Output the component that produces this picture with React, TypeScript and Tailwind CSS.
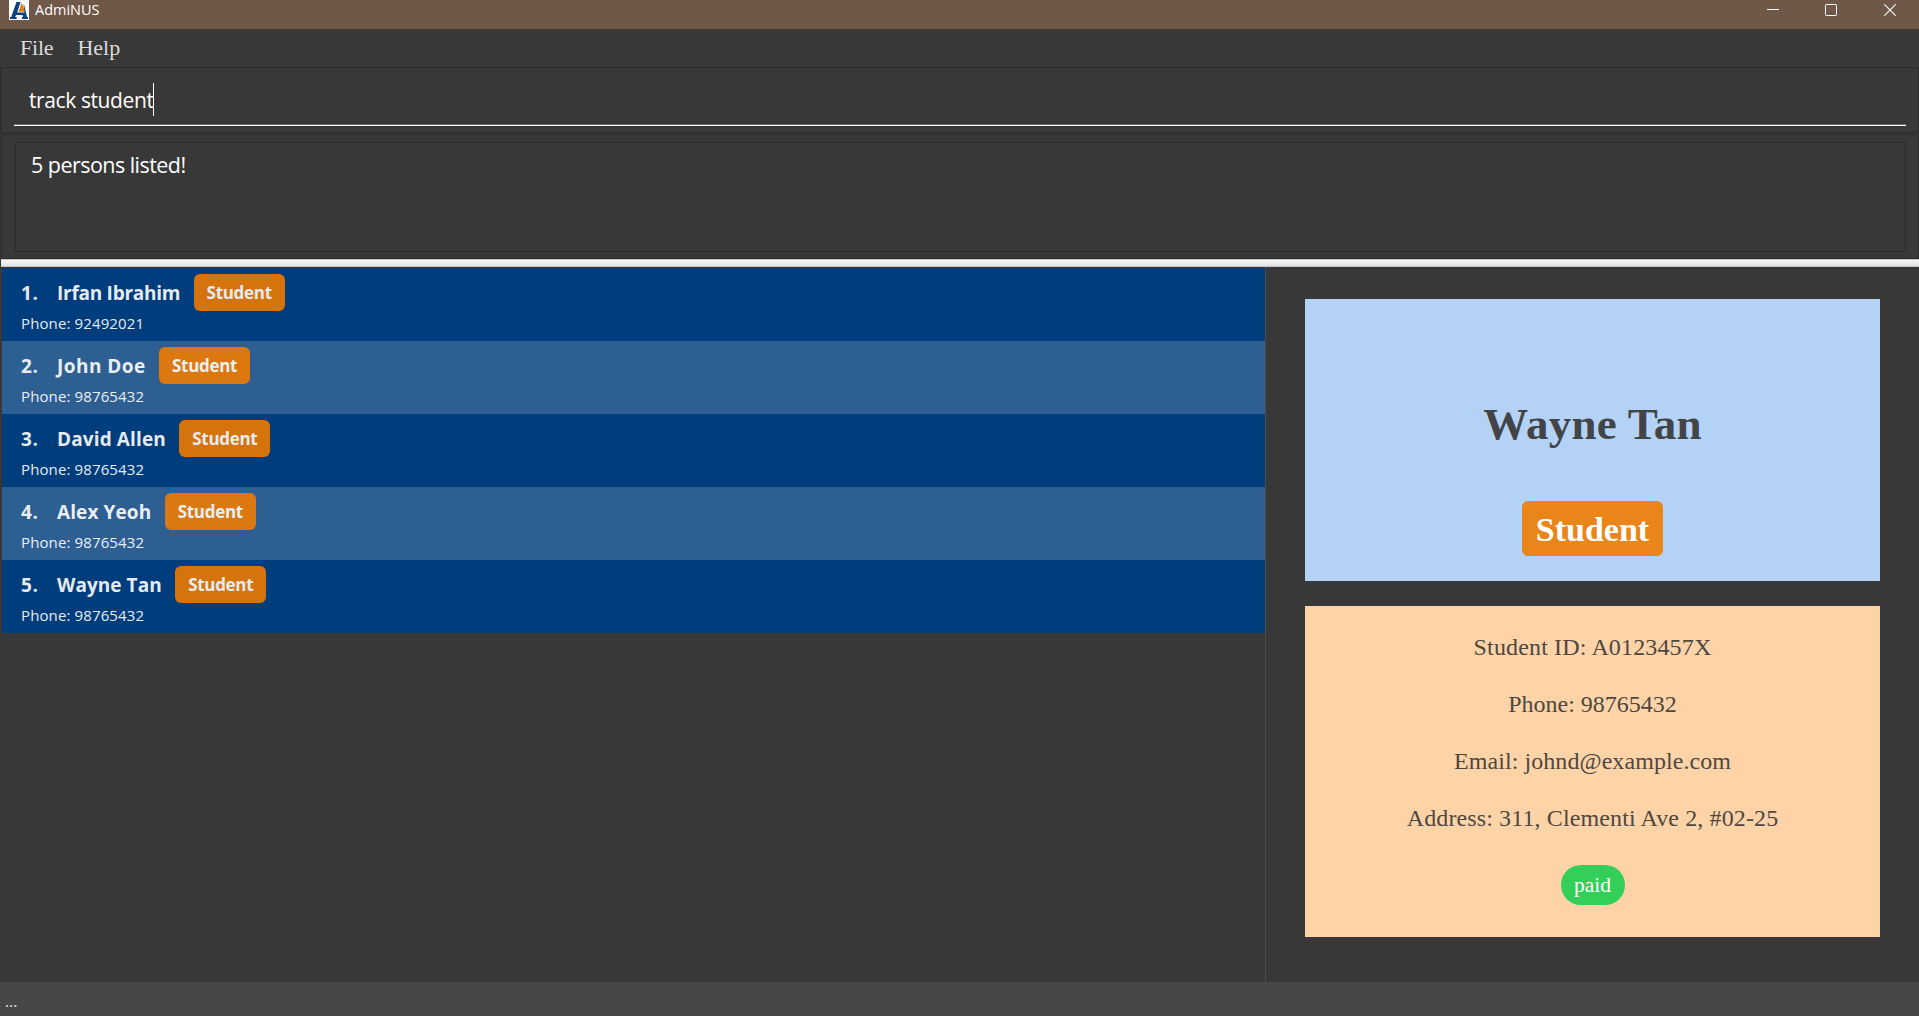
const persons = [
  { name: "Irfan Ibrahim", phone: "92492021", track: "tracking-[-0.26px]" },
  { name: "John Doe", phone: "98765432", track: "tracking-[0.45px]" },
  { name: "David Allen", phone: "98765432", track: "tracking-[0.12px]" },
  { name: "Alex Yeoh", phone: "98765432", track: "tracking-[0.1px]" },
  { name: "Wayne Tan", phone: "98765432", track: "tracking-[0.05px]" },
];

const details = [
  { text: "Student ID: A0123457X", track: "tracking-[0.15px]" },
  { text: "Phone: 98765432", track: "tracking-normal" },
  { text: "Email: johnd@example.com", track: "tracking-[0.07px]" },
  { text: "Address: 311, Clementi Ave 2, #02-25", track: "tracking-[0.12px]" },
];

function Logo() {
  return (
    <svg width="20" height="20" viewBox="0 0 20 20" className="shrink-0">
      <rect width="20" height="20" fill="#fff" />
      <path d="M14 1L18 -1M15 4L19 1" stroke="#d8d8d8" strokeWidth="0.8" />
      <path d="M7.5 2H11.6L8.2 12.4H15.4L14.6 9L14.8 3.4L18 17H19V19H13V17H14L13.6 15H7L6.2 17H7.6V19H1V17H2.2Z" fill="#0b427f" />
      <path d="M12.8 2.6L16 11.8H9.6Z" fill="#ef7c00" />
    </svg>
  );
}

function TitleBar() {
  return (
    <header className="flex h-[29px] items-start bg-[#6f5848] pl-[9px] text-white">
      <Logo />
      <span className="ml-1.5 text-[14.5px] leading-5">AdmiNUS</span>
      <div className="ml-auto flex pr-[23px] pt-1">
        <svg width="12" height="12" className="mr-[46px]" stroke="#fff" fill="none"><path d="M0 5.5H12" /></svg>
        <svg width="12" height="12" className="mr-[47px]" stroke="#fff" fill="none"><rect x="0.5" y="0.5" width="11" height="11" rx="0.8" /></svg>
        <svg width="12" height="12" stroke="#fff" fill="none"><path d="M0.3 0.3L11.7 11.7M11.7 0.3L0.3 11.7" strokeWidth="1.1" /></svg>
      </div>
    </header>
  );
}

function PersonRow({ index }: { index: number }) {
  const p = persons[index];
  const even = index % 2 === 1;
  return (
    <li className={`h-[73px] pl-[19px] pt-1.5 ${even ? "bg-[#2d5f93] text-[#eaeff4]" : "bg-[#003d7c] text-[#e5ebf1]"}`}>
      <div className="flex h-[37px] items-center font-bold">
        <span className="w-9 pt-px text-[19px] tracking-[0.5px]">{index + 1}.</span>
        <span className={`whitespace-nowrap pt-px text-[19px] ${p.track}`}>{p.name}</span>
        <span className={`ml-[13.5px] flex h-[37px] w-[91px] items-center justify-center rounded-md text-[17px] tracking-[-0.3px] ${even ? "bg-[#dc7810]" : "bg-[#d5740c]"}`}>
          Student
        </span>
      </div>
      <div className="text-[15px] leading-6 tracking-[0.12px]">Phone: {p.phone}</div>
    </li>
  );
}

function DetailPanel() {
  return (
    <section className="flex-1 pl-[39px] pr-[39px] pt-8 font-['Liberation_Serif',serif]">
      <div className="flex h-[282px] flex-col items-center bg-[#b4d2f6] pt-[100px]">
        <h1 className="text-[45px] font-bold leading-[50px] tracking-[0.25px] text-[#424446]">Wayne Tan</h1>
        <span className="mt-[52px] flex h-[55px] w-[141px] items-center justify-center rounded-md bg-[#e98519] pt-px text-[34px] font-bold text-white">
          Student
        </span>
      </div>
      <div className="mt-[25px] flex h-[331px] flex-col items-center bg-[#ffd3a8] pt-[13px] text-[24px] leading-[57px] text-[#4c4841]">
        {details.map((d) => (
          <p key={d.text} className={`whitespace-nowrap ${d.track}`}>{d.text}</p>
        ))}
        <span className="mt-[18px] flex h-10 w-16 items-center justify-center rounded-[20px] bg-[#33cf58] text-[21.5px] text-white">
          paid
        </span>
      </div>
    </section>
  );
}

export default function App() {
  return (
    <div className="flex h-[1016px] w-[1919px] flex-col overflow-hidden bg-[#383838] font-['Open_Sans','Noto_Sans',sans-serif]">
      <TitleBar />
      <nav className="flex h-[38px] items-center gap-[24px] pb-0.5 pl-5 font-['Liberation_Serif',serif] text-[22px] text-[#dcdcdc]">
        <span className="tracking-[-0.2px]">File</span>
        <span>Help</span>
      </nav>
      <div className="h-[66px] border border-[#2b2b2b] pl-[13px] pr-3">
        <div className="flex h-[58px] items-center border-b border-white pl-[15px] pt-1.5 text-[21px] tracking-[-0.4px] text-white shadow-[inset_0_-1px_0_#6a6a6a]">
          <span className="pt-[3px]">track student</span>
          <span className="h-[33px] w-px bg-white" />
        </div>
      </div>
      <div className="ml-px mt-px h-[125px] border border-[#2b2b2b] pl-[13px] pr-3 pt-[7px]">
        <div className="h-[110px] border border-[#2b2b2b] pl-[15px] pt-[7px] text-[21.5px] leading-[30px] tracking-[-0.54px] text-white">
          5 persons listed!
        </div>
      </div>
      <div className="ml-px h-2 border-y border-[#c4c4c4] bg-linear-to-b from-[#f6f6f6] to-[#e2e2e2]" />
      <main className="flex h-[715px]">
        <ul className="ml-0.5 w-[1264px] border-r border-[#4d4d4d] pt-px">
          {persons.map((p, i) => (
            <PersonRow key={p.name} index={i} />
          ))}
        </ul>
        <DetailPanel />
      </main>
      <footer className="h-[34px] border-b border-[#4e4447] bg-[#464646] pl-[5px] pt-[9px] text-[15px] font-semibold leading-5 text-[#d4d4d4]">...</footer>
    </div>
  );
}
